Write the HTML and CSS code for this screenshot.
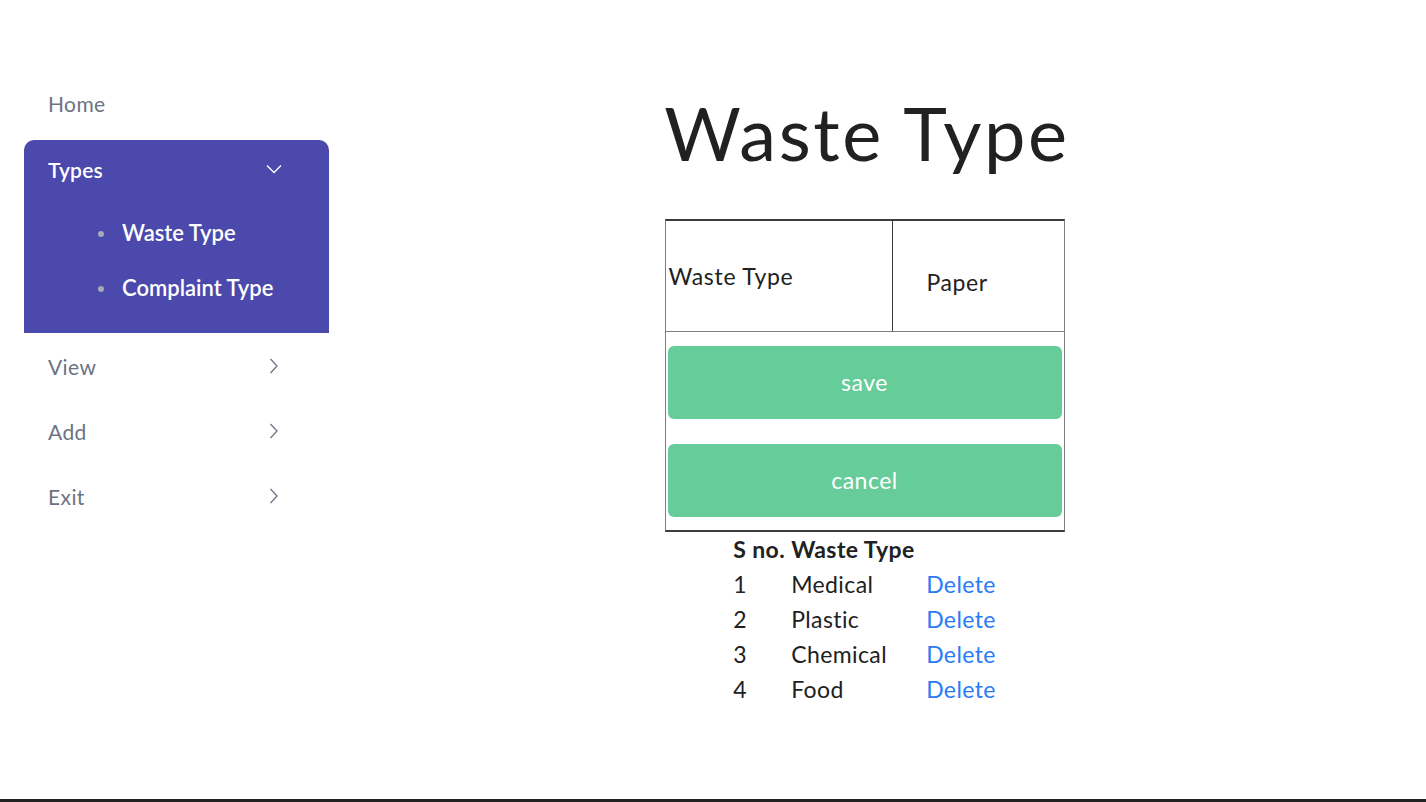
FILE: index.html
```html
<!DOCTYPE html>
<html lang="en">
<head>
<meta charset="utf-8">
<title>Waste Type</title>
<link rel="stylesheet" href="styles.css">
</head>
<body>
<div class="page">
  <div class="layout">
    <nav class="sidebar">
      <a class="nav-link home" href="#">Home</a>
      <div class="panel">
        <a class="nav-link active" href="#">
          <span>Types</span>
          <svg class="chev-down" width="16" height="10" viewBox="0 0 16 10"><path d="M1 1.5 L8 8.5 L15 1.5" fill="none" stroke="#fff" stroke-width="1.4"/></svg>
        </a>
        <ul class="submenu">
          <li><a href="#">Waste Type</a></li>
          <li><a href="#">Complaint Type</a></li>
        </ul>
      </div>
      <a class="nav-link first-after" href="#">
        <span>View</span>
        <svg class="chev-right" width="9" height="16" viewBox="0 0 9 16"><path d="M1.5 1 L8 8 L1.5 15" fill="none" stroke="#6c7383" stroke-width="1.3"/></svg>
      </a>
      <a class="nav-link" href="#">
        <span>Add</span>
        <svg class="chev-right" width="9" height="16" viewBox="0 0 9 16"><path d="M1.5 1 L8 8 L1.5 15" fill="none" stroke="#6c7383" stroke-width="1.3"/></svg>
      </a>
      <a class="nav-link" href="#">
        <span>Exit</span>
        <svg class="chev-right" width="9" height="16" viewBox="0 0 9 16"><path d="M1.5 1 L8 8 L1.5 15" fill="none" stroke="#6c7383" stroke-width="1.3"/></svg>
      </a>
    </nav>
    <main class="main">
      <h1 class="title">Waste Type</h1>
      <form class="form-box">
        <div class="form-row">
          <label class="form-label">Waste Type</label>
          <div class="form-value"><input class="form-input" type="text" value="Paper"></div>
        </div>
        <div class="form-actions">
          <button type="button" class="btn">save</button>
          <button type="button" class="btn">cancel</button>
        </div>
      </form>
      <div class="list">
        <div class="list-head">S no.</div>
        <div class="list-head">Waste Type</div>
        <div class="list-head"></div>
        <div>1</div><div>Medical</div><a href="#" class="del">Delete</a>
        <div>2</div><div>Plastic</div><a href="#" class="del">Delete</a>
        <div>3</div><div>Chemical</div><a href="#" class="del">Delete</a>
        <div>4</div><div>Food</div><a href="#" class="del">Delete</a>
      </div>
    </main>
  </div>
  <footer class="footer"></footer>
</div>
</body>
</html>
```
FILE: styles.css
```css
* { box-sizing: border-box; }
html, body { margin: 0; padding: 0; }
body {
  font-family: "Lato", "Noto Sans", sans-serif;
  color: #212121;
  background: #fff;
}
.page {
  height: 100vh;
  display: flex;
  flex-direction: column;
}
.layout {
  flex: 1;
  display: flex;
}
.sidebar {
  width: 329px;
  flex: none;
  padding: 72px 0 0 24px;
  display: flex;
  flex-direction: column;
}
.nav-link {
  height: 64px;
  display: flex;
  align-items: center;
  justify-content: space-between;
  padding: 0 46px 2px 24px;
  font-size: 21px;
  letter-spacing: 0.4px;
  color: #6c7383;
  text-decoration: none;
}
.nav-link.home { margin-bottom: 4px; }
.nav-link.first-after { margin-top: 2px; }
.nav-link + .nav-link { margin-top: 1px; }
.panel {
  background: #4b49ac;
  border-radius: 10px 10px 0 0;
  padding-bottom: 18px;
}
.nav-link.active {
  height: 60px;
  color: #fff;
  font-weight: 600;
  letter-spacing: 0.2px;
}
.chev-down { margin-right: 1px; }
.chev-right { margin-right: 5px; }
.submenu {
  margin: 0;
  padding: 5px 0 0 98px;
  list-style: none;
}
.submenu li {
  height: 55px;
  display: flex;
  align-items: center;
  font-size: 22px;
  position: relative;
}
.submenu li::before {
  content: "";
  position: absolute;
  left: -24px;
  top: 50%;
  width: 6px;
  height: 6px;
  margin-top: -2px;
  border-radius: 50%;
  background: #a9a9b8;
}
.submenu a {
  color: #fff;
  font-weight: 600;
  text-decoration: none;
}
.main {
  flex: 1;
  display: flex;
  flex-direction: column;
  align-items: center;
  padding: 89px 26px 0 0;
}
.title {
  margin: 0;
  padding-left: 5px;
  font-size: 74px;
  font-weight: 400;
  line-height: 1.2;
  letter-spacing: 2.6px;
  color: #212121;
}
.form-box {
  margin-top: 41px;
  width: 400px;
  border: 1px solid #7d7d7d;
  border-top: 2px solid #3c3c3c;
  border-bottom: 2px solid #3c3c3c;
}
.form-row {
  display: flex;
  height: 111px;
  border-bottom: 1px solid #7d7d7d;
}
.form-label {
  width: 227px;
  border-right: 1px solid #3c3c3c;
  display: flex;
  align-items: center;
  padding-left: 3px;
  font-size: 23px;
  letter-spacing: 0.7px;
  color: #212121;
}
.form-value {
  flex: 1;
  display: flex;
  align-items: center;
  padding-top: 12px;
}
.form-input {
  border: none;
  outline: none;
  width: 100%;
  padding: 0 0 0 34px;
  font-family: inherit;
  font-size: 23px;
  letter-spacing: 0.6px;
  color: #212121;
  background: transparent;
}
.form-actions {
  display: flex;
  flex-direction: column;
  gap: 25px;
  padding: 14px 2px 13px 2px;
}
.btn {
  height: 73px;
  border: none;
  border-radius: 6px;
  background: #66cc99;
  color: #fff;
  font-family: inherit;
  font-size: 23px;
  letter-spacing: 0.5px;
  cursor: pointer;
}
.list {
  display: grid;
  grid-template-columns: 58px 135px auto;
  font-size: 23px;
  letter-spacing: 0.4px;
  line-height: 35px;
  color: #212121;
  margin-left: 0;
}
.list-head { font-weight: 700; }
.del {
  color: #2a7bf6;
  text-decoration: none;
}
.footer {
  height: 3px;
  background: #222;
  flex: none;
}
```
